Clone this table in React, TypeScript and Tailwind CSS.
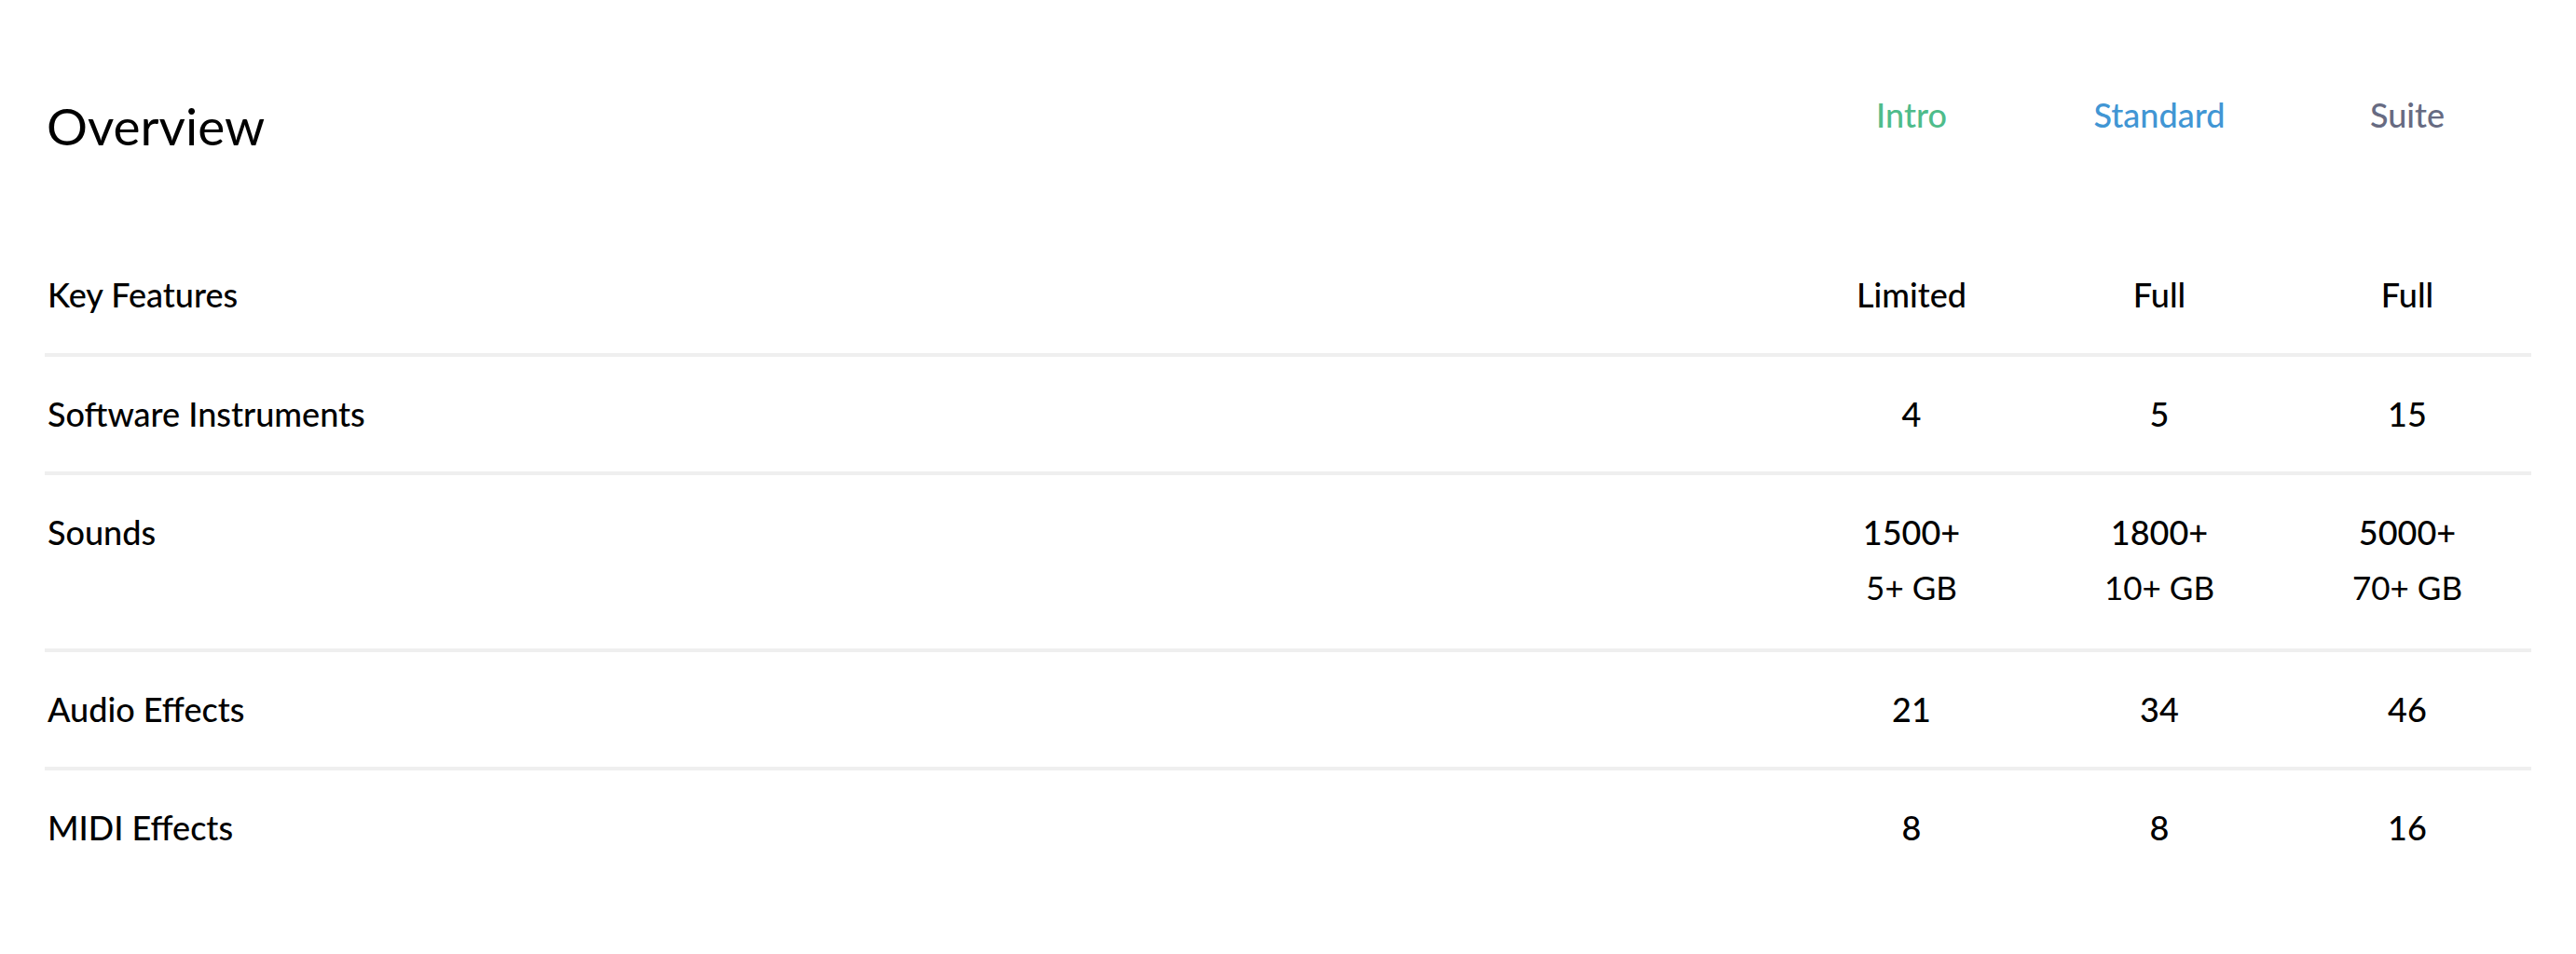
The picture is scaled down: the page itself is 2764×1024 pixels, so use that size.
import React from 'react';

type Tier = { name: string; color: string };

const tiers: Tier[] = [
  { name: 'Intro', color: 'text-[#4fbc8b]' },
  { name: 'Standard', color: 'text-[#4196d4]' },
  { name: 'Suite', color: 'text-[#676b82]' },
];

type Row = { label: string; values: string[]; sub?: string[]; pad: string };

const rows: Row[] = [
  { label: 'Key Features', values: ['Limited', 'Full', 'Full'], pad: 'pt-[43px] pb-[45px]' },
  { label: 'Software Instruments', values: ['4', '5', '15'], pad: 'pt-[43px] pb-[44px]' },
  {
    label: 'Sounds',
    values: ['1500+', '1800+', '5000+'],
    sub: ['5+ GB', '10+ GB', '70+ GB'],
    pad: 'pt-[43px] pb-[48px]',
  },
  { label: 'Audio Effects', values: ['21', '34', '46'], pad: 'pt-[43px] pb-[44px]' },
  { label: 'MIDI Effects', values: ['8', '8', '16'], pad: 'pt-[43px] pb-[44px]' },
];

const grid = 'grid grid-cols-[1fr_266px_266px_266px]';

export default function App() {
  return (
    <div className="min-h-screen bg-white px-[48px] text-black font-['Lato','Liberation_Sans',sans-serif]">
      {/* header */}
      <div className={`${grid} h-[255px] items-start pt-[105px]`}>
        <h1 className="mt-[3px] pl-[2px] text-[55px] font-normal leading-none">Overview</h1>
        {tiers.map((t) => (
          <div key={t.name} className={`text-center text-[36px] font-medium leading-none ${t.color}`}>
            {t.name}
          </div>
        ))}
      </div>

      {rows.map((r, i) => (
        <div
          key={r.label}
          className={`${grid} items-start ${r.pad} ${
            i < rows.length - 1 ? 'border-b-4 border-[#efefef]' : ''
          }`}
        >
          <div className="pl-[3px] text-[36px] font-medium leading-none">{r.label}</div>
          {r.values.map((v, j) => (
            <div key={j} className="flex flex-col items-center">
              <span className="text-[36px] font-medium leading-none">{v}</span>
              {r.sub && (
                <span className="mt-[24px] text-[35px] font-normal leading-none">{r.sub[j]}</span>
              )}
            </div>
          ))}
        </div>
      ))}
    </div>
  );
}
